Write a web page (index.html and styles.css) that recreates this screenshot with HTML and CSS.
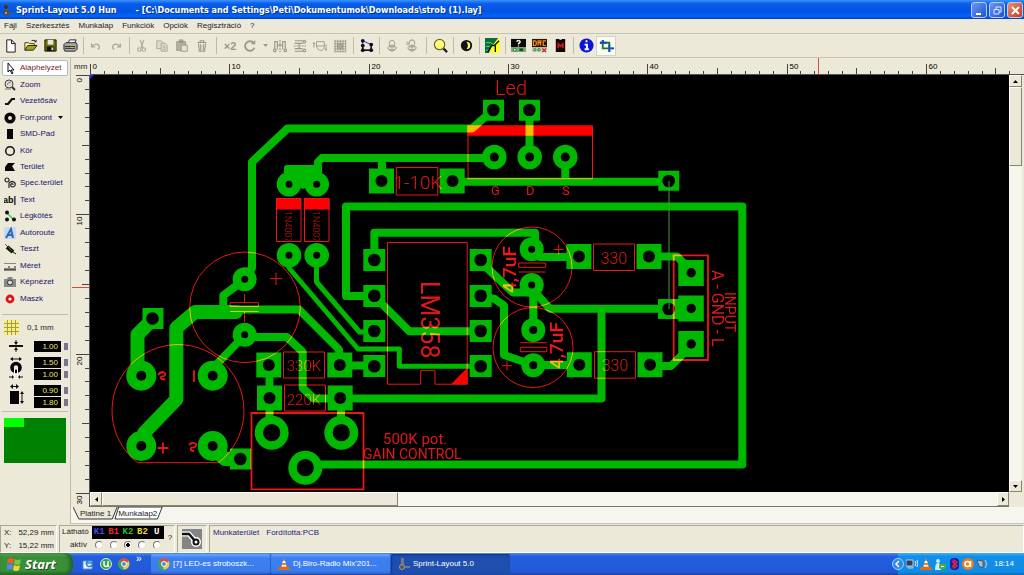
FILE: index.html
```html
<!DOCTYPE html>
<html lang="hu">
<head>
<meta charset="utf-8">
<title>Sprint-Layout 5.0 Hun</title>
<link rel="stylesheet" href="styles.css">
</head>
<body>
<header class="titlebar">
  <svg class="app-icon" width="13" height="14" viewBox="0 0 13 14"><path d="M3 1h3v8H3zM7 9h5v2H7z" fill="#555"/><circle cx="4" cy="10" r="3" fill="#4c4c48"/><circle cx="4" cy="10" r="1" fill="#bbb"/><circle cx="4" cy="4" r="2" fill="#333"/></svg>
  <h1 class="title"><span>Sprint-Layout 5.0 Hun</span><span>- [C:\Documents and Settings\Peti\Dokumentumok\Downloads\strob (1).lay]</span></h1>
  <div class="window-buttons">
    <button class="wbtn" aria-label="Minimize"><svg width="15" height="15" viewBox="0 0 15 15"><path d="M4 10h5v2H4z" fill="#fff"/></svg></button>
    <button class="wbtn" aria-label="Restore"><svg width="15" height="15" viewBox="0 0 15 15" fill="none" stroke="#dfe9ff"><path d="M6 6V4h5v5H9M4 6.500h5v4.500H4z"/></svg></button>
    <button class="wbtn wbtn-close" aria-label="Close"><svg width="15" height="15" viewBox="0 0 15 15" stroke="#fff" stroke-width="2"><path d="M4 4l7 7M11 4l-7 7"/></svg></button>
  </div>
</header>

<nav class="menubar">
  <button>Fájl</button><button>Szerkesztés</button><button>Munkalap</button><button>Funkciók</button><button>Opciók</button><button>Regisztráció</button><button>?</button>
</nav>

<div class="toolbar">
  <button class="tool" aria-label="New"><svg viewBox="0 0 16 16"><path d="M4 2h5l4 4v9H4zM9 2v4h4" fill="#fff" stroke="#111"/></svg></button>
  <button class="tool" aria-label="Open"><svg viewBox="0 0 16 16"><path d="M2 13V5h4l1 1h5v3" fill="#ffff80" stroke="#333"/><path d="M2 13l3-5h10l-4 5z" fill="#a8a020" stroke="#222"/><path d="M9 3q3-2 5 1m0-2v2h-2" fill="none" stroke="#222"/></svg></button>
  <button class="tool" aria-label="Save"><svg viewBox="0 0 16 16"><path d="M2 2h12v12H2z" fill="#747400" stroke="#111"/><path d="M5 2h6v5H5z" fill="#e8e8e0"/><path d="M4 9h8v5H4z" fill="#111"/><path d="M9 10h2v3H9z" fill="#ddd"/></svg></button>
  <button class="tool" aria-label="Print"><svg viewBox="0 0 16 16"><path d="M5 6l2-4h7l-2 4z" fill="#fff" stroke="#222"/><path d="M1 7l2-2h11l1 2v5l-2 2H2l-1-2z" fill="#aaa" stroke="#222"/><path d="M2 9h11M2 11h11" stroke="#222"/><path d="M8 10h3" stroke="#dd0"/></svg></button>
  <span class="sep"></span>
  <button class="tool off" aria-label="Undo" disabled><svg viewBox="0 0 16 16"><path d="M3 5v4h4M3 9q4-5 8-2 2 3-1 5" fill="none" stroke="#aaa797" stroke-width="1.500"/></svg></button>
  <button class="tool off" aria-label="Redo" disabled><svg viewBox="0 0 16 16"><path d="M13 5v4H9M13 9Q9 4 5 7q-2 3 1 5" fill="none" stroke="#aaa797" stroke-width="1.500"/></svg></button>
  <span class="sep"></span>
  <button class="tool off" aria-label="Cut" disabled><svg viewBox="0 0 16 16" fill="none" stroke="#aaa797" stroke-width="1.300"><path d="M6 1l3 9M10 1L7 10"/><circle cx="5" cy="12" r="2"/><circle cx="10" cy="12" r="2"/></svg></button>
  <button class="tool off" aria-label="Copy" disabled><svg viewBox="0 0 16 16" fill="#dddacb" stroke="#aaa797"><path d="M2 2h5l2 2v7H2z"/><path d="M7 5h5l2 2v7H7zM9 8h3M9 10h3M9 12h3"/></svg></button>
  <button class="tool off" aria-label="Paste" disabled><svg viewBox="0 0 16 16" fill="#b4b1a2" stroke="#96937f"><path d="M2 3h10v10H2zM5 1h4v3H5z"/><path d="M7 7h7v7H7z" fill="#e5e2d3"/></svg></button>
  <button class="tool off" aria-label="Delete" disabled><svg viewBox="0 0 16 16" fill="none" stroke="#9b9888" stroke-width="1.300"><path d="M3 4h10M6 4V2h4v2M4 5l1 9h6l1-9M6.500 6v7M9.500 6v7"/></svg></button>
  <span class="sep sep-wide"></span>
  <button class="tool off tool-text" disabled>×2</button>
  <button class="tool off" aria-label="Rotate" disabled><svg viewBox="0 0 16 16"><path d="M12.500 5A5.500 5.500 0 1 0 13 10" fill="none" stroke="#9b9888" stroke-width="2.200"/><path d="M9 6h5V1z" fill="#9b9888"/></svg></button>
  <button class="drop off" aria-label="Rotation angle" disabled><svg width="5" height="3" viewBox="0 0 5 3"><path d="M0 0h5L2.500 3z" fill="#9b9888"/></svg></button>
  <button class="tool off" aria-label="Mirror horizontal" disabled><svg viewBox="0 0 16 16" fill="none" stroke="#9b9888" stroke-width="1.300"><path d="M8 1v14" stroke-dasharray="2 1"/><path d="M2 11V3h3v9M14 11V3h-3v9M5 7h6"/><circle cx="2" cy="13" r="1.500"/><circle cx="14" cy="13" r="1.500"/></svg></button>
  <button class="tool off" aria-label="Mirror vertical" disabled><svg viewBox="0 0 16 16" fill="none" stroke="#9b9888" stroke-width="1.300"><path d="M1 8h14" stroke-dasharray="2 1"/><path d="M2 2h9M2 5h9M2 14h9M2 11h9M7 5v6"/><circle cx="13" cy="3" r="1.500"/><circle cx="13" cy="13" r="1.500"/></svg></button>
  <button class="tool off" aria-label="Swap side" disabled><svg viewBox="0 0 16 16" fill="none" stroke="#9b9888"><path d="M4 3h9v5H4zM4 8q1 5 5 5t4-5M1 10V4m-1 2l1-2 1 2M15 6v7m-1-2l1 2 1-2"/></svg></button>
  <button class="tool off" aria-label="Snap to grid" disabled><svg viewBox="0 0 16 16" fill="none" stroke="#9b9888"><path d="M1 2.500h14M1 5.500h14M1 8.500h14M1 11.500h14M1 14.500h14M2.500 1v14M5.500 1v14M8.500 1v14M11.500 1v14M14.500 1v14"/><path d="M5 5h6v6H5z" fill="#aaa797"/></svg></button>
  <span class="sep"></span>
  <button class="tool" aria-label="Remove connections"><svg viewBox="0 0 16 16"><path d="M4 3l9 4M4 3v10h9V7" fill="none" stroke="#2438c8"/><path d="M4 8v5h9V8" fill="none" stroke="#111" stroke-width="1.500"/><g fill="#111"><circle cx="4" cy="3" r="2"/><circle cx="4" cy="8" r="2"/><circle cx="4" cy="13" r="2"/><circle cx="13" cy="7" r="2"/><circle cx="13" cy="13" r="2"/></g></svg></button>
  <span class="sep"></span>
  <button class="tool off" aria-label="Group" disabled><svg viewBox="0 0 16 16" fill="none" stroke="#aaa797" stroke-width="1.200"><path d="M5 7V4q3-5 6 0v3M3 10q5-6 10 0-5 8-10 0M5 9h6M5 12h6M8 7v7"/></svg></button>
  <button class="tool off" aria-label="Ungroup" disabled><svg viewBox="0 0 16 16" fill="none" stroke="#aaa797" stroke-width="1.200"><path d="M5 5V3q3-4 6 0v4M3 10q5-6 10 0-5 8-10 0M5 9h6M5 12h6M8 7v7M2 3l3 3M1 6h4"/></svg></button>
  <span class="sep sep-wide"></span>
  <button class="tool" aria-label="Zoom"><svg viewBox="0 0 16 16"><path d="M11 11l4 4" stroke="#222" stroke-width="2.500"/><circle cx="7" cy="7" r="5.500" fill="#ffff70" stroke="#6d6936" stroke-width="1.300"/></svg></button>
  <span class="sep"></span>
  <button class="tool" aria-label="Contrast"><svg viewBox="0 0 16 16"><circle cx="8" cy="8" r="6" fill="#111"/><path d="M8 4a4 4 0 1 1 0 8q3-4 0-8" fill="#ffff60"/></svg></button>
  <span class="sep"></span>
  <button class="tool" aria-label="Photo view"><svg viewBox="0 0 16 16"><path d="M0 0h16v16H0z" fill="#ffff28"/><path d="M0 0h14L8 8 4 16H0z" fill="#086b42"/><path d="M1 5h5l3 2M1 9h4l2 1M1 13h4" stroke="#48ee45" fill="none"/><path d="M15 3l-5 5H7l-4 7M11 8v7" stroke="#111" stroke-width="1.500" fill="none"/></svg></button>
  <span class="sep"></span>
  <div class="tool-group">
    <button class="tool" aria-label="Properties"><svg viewBox="0 0 16 16"><path d="M0 1h16v9H0z" fill="#0a0a0a"/><path d="M0 10h16v5H0z" fill="#82a584"/><path d="M6 4q1-2 3-1 2 1-1 3v1M8 8v1" stroke="#fff" fill="none" stroke-width="1.400"/><path d="M9 11h4v3H9z" fill="#065b09"/><circle cx="4" cy="12.500" r="1.500" fill="#fff" stroke="#087308"/></svg></button>
    <button class="tool" aria-label="Design rule check"><svg viewBox="0 0 16 16"><path d="M0 1h16v9H0z" fill="#20160a"/><path d="M0 10h16v5H0z" fill="#ccd0bd"/><path d="M1.500 3v5h2l1-1V4l-1-1zM6.500 8V3h3v2h-3m2 0l1 3M15 3h-3v5h3" stroke="#ff8a16" stroke-width="1.300" fill="none"/><path d="M11 11l4 4m0-4l-4 4" stroke="#d01010" stroke-width="1.300"/><circle cx="3" cy="12.500" r="1.300" fill="none" stroke="#178322"/><circle cx="7.500" cy="12.500" r="1.300" fill="none" stroke="#178322"/></svg></button>
    <button class="tool" aria-label="Macro library"><svg viewBox="0 0 16 16"><path d="M3 1h3l2 1 2-1h3v14H3z" fill="#100404"/><path d="M5.500 11V6L8 9l2.500-3v5" stroke="#e51b1b" fill="none" stroke-width="1.500"/></svg></button>
  </div>
  <span class="sep"></span>
  <button class="tool" aria-label="Info"><svg viewBox="0 0 16 16"><circle cx="8" cy="8" r="7.500" fill="#0d13d9"/><path d="M8 2.500v2M6 7h2.500v5M6 12h4.500" stroke="#fff" stroke-width="2" fill="none"/></svg></button>
  <button class="tool pressed" aria-label="Transparent"><svg viewBox="0 0 16 16" fill="none"><path d="M4 2v9h11M1 5h10v10" stroke="#168020" stroke-width="2"/><path d="M1 5h7M11 7v8M4 2v3M13 11h3" stroke="#1746d0" stroke-width="2"/></svg></button>
</div>

<main class="main">
  <aside class="sidebar">
    <div class="modes">
      <button class="mode mode-active"><svg viewBox="0 0 12 12"><path d="M4 1v9l2-2 2 4 1-1-2-3h3z" fill="#fff" stroke="#111"/></svg>Alaphelyzet</button>
      <button class="mode"><svg viewBox="0 0 12 12"><path d="M8 8l3 3" stroke="#333" stroke-width="2"/><circle cx="5" cy="5" r="4" fill="#deded6" stroke="#444"/><path d="M3 6q1-3 4-3M1 10h6" stroke="#777" fill="none"/></svg>Zoom</button>
      <button class="mode"><svg viewBox="0 0 12 12"><path d="M1 9h3l4-5h3" fill="none" stroke="#111" stroke-width="2.200"/></svg>Vezetősáv</button>
      <button class="mode"><svg viewBox="0 0 12 12"><circle cx="6" cy="6" r="3.800" fill="none" stroke="#050505" stroke-width="3.600"/></svg>Forr.pont<svg class="caret" viewBox="0 0 5 3"><path d="M0 0h5L2.500 3z"/></svg></button>
      <button class="mode"><svg viewBox="0 0 12 12"><path d="M3 1h6v10H3z" fill="#050505"/></svg>SMD-Pad</button>
      <button class="mode"><svg viewBox="0 0 12 12"><circle cx="6" cy="6" r="4.300" fill="none" stroke="#111" stroke-width="1.500"/></svg>Kör</button>
      <button class="mode"><svg viewBox="0 0 12 12"><path d="M4 2h7L8 5l3 5H1V6z" fill="#080808"/></svg>Terület</button>
      <button class="mode"><svg viewBox="0 0 12 12" fill="none" stroke="#222" stroke-width="1.200"><circle cx="3" cy="3" r="2"/><path d="M5 6q3-3 6 0 1 4-3 4-2-1-1-3 2-1 2 1M5 6v5"/></svg>Spec.terület</button>
      <button class="mode"><svg viewBox="0 0 12 12"><text class="glyph" x="-1" y="9">ab|</text></svg>Text</button>
      <button class="mode"><svg viewBox="0 0 12 12"><path d="M3 3l6 6" stroke="#38d238" stroke-width="1.500"/><g fill="#111"><circle cx="3" cy="2.500" r="2"/><circle cx="3" cy="9.500" r="2"/><circle cx="10" cy="9.500" r="2"/></g></svg>Légkötés</button>
      <button class="mode"><svg viewBox="0 0 12 12"><path d="M0 0h12v12H0z" fill="#c7daf4"/><path d="M2 11L7 2l2 9M4 8h5" stroke="#3366b4" stroke-width="2" fill="none"/></svg>Autoroute</button>
      <button class="mode"><svg viewBox="0 0 12 12"><path d="M1 1l3 3" stroke="#b33"/><path d="M3 4l6 5" stroke="#111" stroke-width="4"/><path d="M4 4l4 4" stroke="#2a8a2a"/><path d="M9 9l3 2" stroke="#111"/></svg>Teszt</button>
      <button class="mode"><svg viewBox="0 0 12 12"><path d="M0 3.500h12" stroke="#888"/><path d="M1 10V8m2 2V8m2 2V6m2 4V8m2 2V8m2 2V6M0 10h12" stroke="#222"/></svg>Méret</button>
      <button class="mode"><svg viewBox="0 0 12 12"><path d="M0 3h3l1-2h4l1 2h3v8H0z" fill="#888"/><circle cx="6" cy="6.500" r="2.500" fill="#ddd" stroke="#333"/></svg>Képnézet</button>
      <button class="mode"><svg viewBox="0 0 12 12"><circle cx="6" cy="6" r="3" fill="#fff" stroke="#e01217" stroke-width="2.800"/></svg>Maszk</button>
    </div>
    <div class="params">
      <button class="grid-button"><svg width="15" height="15" viewBox="0 0 15 15"><path d="M0 0h15v15H0z" fill="#f7f080"/><path d="M0 3.500h15M0 7.500h15M0 11.500h15M3.500 0v15M7.500 0v15M11.500 0v15" stroke="#a89c40"/></svg>0,1 mm</button>
      <div class="param">
        <svg width="16" height="12" viewBox="0 0 16 12"><path d="M1 6h14" stroke="#111" stroke-width="2"/><path d="M8 0v3M8 9v3" stroke="#111"/><path d="M6 2h4L8 5zM6 10h4L8 7z" fill="#111"/></svg>
        <div class="fields"><label><input value="1.00" aria-label="Track width"><i></i></label></div>
      </div>
      <div class="param">
        <svg width="16" height="24" viewBox="0 0 16 24"><path d="M3 3h10M1 21h4M11 21h4" stroke="#111"/><path d="M5 1v4L2 3zM11 1v4l3-2zM4 19v4l2-2zM12 19v4l-2-2z" fill="#111"/><circle cx="8" cy="11.500" r="4" fill="none" stroke="#050505" stroke-width="3.600"/><path d="M6.500 12v7M9.500 12v7" stroke="#fff"/></svg>
        <div class="fields"><label><input value="1.50" aria-label="Pad diameter"><i></i></label><label><input value="1.00" aria-label="Drill diameter"><i></i></label></div>
      </div>
      <div class="param">
        <svg width="16" height="24" viewBox="0 0 16 24"><path d="M2 7h9v13H2z" fill="#050505"/><path d="M3 2.500h7M14 9v9" stroke="#111"/><path d="M5 0v5L2 2.500zM8 0v5l3-2.500zM12 10h4l-2-3zM12 17h4l-2 3z" fill="#111"/></svg>
        <div class="fields"><label><input value="0.90" aria-label="SMD width"><i></i></label><label><input value="1.80" aria-label="SMD height"><i></i></label></div>
      </div>
    </div>
    <div class="navigator"><div class="viewport"></div></div>
  </aside>

  <section class="workspace">
    <div class="corner">mm</div>
    <svg class="ruler-h" id="ruler-h" aria-hidden="true"></svg>
    <svg class="ruler-v" id="ruler-v" aria-hidden="true"></svg>
    <svg class="board" role="img" aria-label="PCB">
      <g transform="translate(-90 -75)">
        <path d="M90 75h4l-4 4z" fill="#1a2cff"/>
        <g class="copper">
          <g class="trace">
            <path d="M244.500 279l7.500-11V162l35.500-33.500H472L493 110"/>
            <path d="M529.500 110v47M565.300 157v24M316.700 184l1.300-22 4-4H494M382 158v23M452 181.700h216"/>
            <path d="M305 464.500h437.300v-258H346V296h28"/>
            <path d="M374.300 260v-27.300H535v17M540 257h38"/>
            <path d="M480.700 262L513 292.500h19M533.300 285v45M534 291l16 17.800h118M601.500 309v89.500H340"/>
            <path d="M480.700 296l14 3 9.300 6.500V355l29 10h45"/>
            <path d="M376 298l33.500 33.300H481M340 365.500h34"/>
            <path d="M649 256.500h28l14 14M650 366h21l20-20"/>
            <path d="M244 280l-20.700 15.500V311M230 309.500h69l40 40 1 15"/>
            <path d="M244.700 337h42l16 15v36l11 10.500h27M243 337l-31 32M269.500 365v68M341 398v34"/>
          </g>
          <g class="trace trace-wide">
            <path d="M141 444l3-11 32.300-33.500V328L195 312h41M152 320l-14.500 14.500V372"/>
            <path d="M213 448l12 11h15"/>
          </g>
          <g class="trace trace-thin">
            <path d="M289 256v12l69 81h41.300v17.300H481"/><path d="M316.500 256v26l43 50H374"/>
          </g>
          <path d="M287 165h32q3 0 3 3v19h-15l-4 2-4-2h-15v-19q0-3 3-3z"/>
          <path d="M142.500 308h21v21h-21zM230 448.500h21v21h-21zM256.300 352.500h25v25h-25zM327.300 352.500h25v25h-25zM257 385.500h25v25h-25zM327.700 385.500h25v25h-25zM369 168.500h25v25h-25zM439.700 168.500h25v25h-25zM483 99.700h21v21h-21zM519 99.700h21v21h-21zM658.300 170.700h21v20h-21zM658 299h21v20h-21z"/>
          <path d="M363.300 249h22v22h-22zM363.300 285h22v22h-22zM363.300 320h22v22h-22zM363.300 355h22v22h-22zM469.700 249h22v22h-22zM469.700 285h22v22h-22zM469.700 320h22v22h-22zM469.700 355h22v22h-22z"/>
          <path d="M566.400 244h25v25h-25zM636.500 244h25v25h-25zM566.800 352.300h25v25h-25zM637.500 352.300h25v25h-25zM678.300 260h25.500v26h-25.500zM678.300 295.500h25.500v26h-25.500zM678.300 331h25.500v26h-25.500z"/>
          <g>
            <circle cx="141.300" cy="375.700" r="15"/><circle cx="212.700" cy="375.700" r="15"/><circle cx="141.300" cy="446" r="15"/><circle cx="212.700" cy="446" r="15"/>
            <circle cx="271.700" cy="432.700" r="17"/><circle cx="341.300" cy="432.700" r="17"/><circle cx="305.300" cy="467.700" r="17"/>
            <circle cx="244.700" cy="279.300" r="12"/><circle cx="244.700" cy="334.700" r="12"/><circle cx="289" cy="184.300" r="12.300"/><circle cx="316.700" cy="184.300" r="12.300"/><circle cx="289" cy="255.300" r="12.300"/><circle cx="316.700" cy="255.300" r="12.300"/>
            <circle cx="494.300" cy="157" r="12.300"/><circle cx="529.700" cy="157" r="12.300"/><circle cx="565.300" cy="157" r="12.300"/>
            <circle cx="531.700" cy="249.300" r="12"/><circle cx="531.700" cy="285" r="12"/><circle cx="533.300" cy="330" r="12"/><circle cx="533.300" cy="365.300" r="12"/>
          </g>
        </g>
        <g class="holes">
          <g><circle cx="152.500" cy="318.500" r="6.300"/><circle cx="240.300" cy="459" r="6.300"/><circle cx="268.800" cy="365" r="6"/><circle cx="339.800" cy="365" r="6"/><circle cx="269.500" cy="398" r="6"/><circle cx="340.200" cy="398" r="6"/><circle cx="381.500" cy="181" r="6"/><circle cx="452.500" cy="181" r="6"/><circle cx="493.300" cy="110" r="6.300"/><circle cx="529.300" cy="110" r="6.300"/><circle cx="668.700" cy="181" r="6.300"/><circle cx="668.700" cy="309" r="6.300"/></g>
          <g><circle cx="374.300" cy="260" r="6.300"/><circle cx="374.300" cy="295.700" r="6.300"/><circle cx="374.300" cy="331" r="6.300"/><circle cx="374.300" cy="366.300" r="6.300"/><circle cx="480.700" cy="260" r="6.300"/><circle cx="480.700" cy="295.700" r="6.300"/><circle cx="480.700" cy="331" r="6.300"/><circle cx="480.700" cy="366.300" r="6.300"/></g>
          <g><circle cx="579" cy="256.500" r="6"/><circle cx="649" cy="256.500" r="6"/><circle cx="579.300" cy="364.700" r="6"/><circle cx="650" cy="364.700" r="6"/><circle cx="691.200" cy="272.800" r="4.700"/><circle cx="691.200" cy="308.500" r="4.700"/><circle cx="691.200" cy="344" r="4.700"/></g>
          <g><circle cx="141.300" cy="375.700" r="5"/><circle cx="212.700" cy="375.700" r="5"/><circle cx="141.300" cy="446" r="5"/><circle cx="212.700" cy="446" r="5"/><circle cx="271.700" cy="432.700" r="8.600"/><circle cx="341.300" cy="432.700" r="8.600"/><circle cx="305.300" cy="467.700" r="8.600"/></g>
          <g><circle cx="244.700" cy="279.300" r="3.500"/><circle cx="244.700" cy="334.700" r="3.500"/><circle cx="289" cy="184.300" r="3.500"/><circle cx="316.700" cy="184.300" r="3.500"/><circle cx="289" cy="255.300" r="3.500"/><circle cx="316.700" cy="255.300" r="3.500"/><circle cx="494.300" cy="157" r="4.500"/><circle cx="529.700" cy="157" r="4.500"/><circle cx="565.300" cy="157" r="4.500"/><circle cx="531.700" cy="249.300" r="3.500"/><circle cx="531.700" cy="285" r="3.500"/><circle cx="533.300" cy="330" r="4"/><circle cx="533.300" cy="365.300" r="4"/></g>
        </g>
        <path d="M669 181v128" stroke="#3f9b3f"/>
        <g class="silk">
          <g class="silk-fill"><path d="M467.300 125.300h125.400v10.500H467.300zM276 198h25v11.500h-25zM304 198h25.500v11.500H304zM451 384.300l16.300-16.500v16.500z"/></g>
          <path d="M468 126v52.700h124.500V126M396.300 167.500h41.500v27.500h-41.500zM276.500 198.500h24.500v43h-24.500zM304.500 198.500h24.500v43h-24.500z"/>
          <path d="M387.500 242.500h79.700v141.700H435V370.300h-14.300v13.900h-33.200z"/>
          <path d="M283.500 352h41v26h-41zM284.500 385h41v26h-41zM593.500 244h41v26.500h-41zM594.500 351.700h41v26.500h-41z"/>
          <path d="M673.700 255.300H708V360h-34.300zM251.500 413h112v76.300h-112z" stroke-width="1.800"/>
          <circle cx="245" cy="307.300" r="55.300"/><circle cx="532" cy="267" r="40"/><circle cx="533" cy="347.500" r="40"/>
          <path d="M137.500 462.700h81A66 66 0 1 0 137.500 462.700z"/>
          <path d="M230 302.700h28.500v3.800H230zM230 311.500h28.500M244.500 294v8.500M244.500 312v10M276 272.500v12.500M269.800 278.700h12.500"/>
          <path d="M518.700 263h27v4.300h-27zM518.700 272h27M520.300 342.700h26.500M520.300 347.300h26.500v4.400h-26.500zM558.700 244.500v10M553.700 249.500h10M507 360.700v10M502 365.700h10"/>
          <path d="M194 370v12M163 442.500v11M157.500 448h11M158 375q2-3 5-3 4 2 1 4l-3 1q-1 3 4 2M189 445q2-3 5-2 4 1 1 4l-4 1q-1 3 3 3" stroke-width="1.800"/>
          <g class="legend">
            <text x="495" y="95" font-size="20">Led</text>
            <text x="418" y="189" font-size="19" text-anchor="middle">1-10K</text>
            <text x="304" y="371" font-size="15" text-anchor="middle">330K</text>
            <text x="304" y="405" font-size="15" text-anchor="middle">220K</text>
            <text x="614" y="264" font-size="16" text-anchor="middle">330</text>
            <text x="615" y="371" font-size="16" text-anchor="middle">330</text>
            <text transform="translate(285 211) rotate(90)" font-size="9">1N4007</text>
            <text transform="translate(313 211) rotate(90)" font-size="9">1N4007</text>
          </g>
          <g class="legend legend-strong">
            <text transform="translate(421 281) rotate(90)" font-size="25">LM358</text>
            <text x="491" y="195" font-size="13">G</text><text x="526" y="195" font-size="13">D</text><text x="562" y="195" font-size="13">S</text>
            <text x="383" y="444" font-size="15">500K pot.</text>
            <text x="363" y="459" font-size="14">GAIN CONTROL</text>
            <text transform="translate(712 270) rotate(90)" font-size="16">A - GND - L</text>
            <text transform="translate(725 292) rotate(90)" font-size="14">INPUT</text>
          </g>
          <g class="legend legend-bold">
            <text transform="translate(516 293) rotate(-90)" font-size="19">4,7uF</text>
            <text transform="translate(563 369) rotate(-90)" font-size="19">4,7uF</text>
          </g>
        </g>
      </g>
    </svg>
    <div class="scroll scroll-v">
      <button aria-label="Scroll up"><svg viewBox="0 0 5 3"><path d="M0 3h5L2.500 0z"/></svg></button>
      <div class="thumb"></div><div class="track"></div>
      <button aria-label="Scroll down"><svg viewBox="0 0 5 3"><path d="M0 0h5L2.500 3z"/></svg></button>
    </div>
    <div class="scroll scroll-h">
      <button aria-label="Scroll left"><svg viewBox="0 0 5 5"><path d="M4 0v5L1 2.500z"/></svg></button>
      <div class="thumb"></div><div class="track"></div>
      <button aria-label="Scroll right"><svg viewBox="0 0 5 5"><path d="M1 0v5l3-2.500z"/></svg></button>
    </div>
    <div class="tabs">
      <button class="tab"><svg viewBox="0 0 46 13" preserveAspectRatio="none"><path d="M0 0l6 12h34l5-12" fill="#ece9d8" stroke="#333"/></svg><span>Platine 1</span></button>
      <button class="tab tab-active"><svg viewBox="0 0 52 13" preserveAspectRatio="none"><path d="M5 0h46l-5 12H1z" fill="#fff" stroke="#333"/></svg><span>Munkalap2</span></button>
    </div>
  </section>
</main>

<footer class="statusbar">
  <dl class="coords"><dt>X:</dt><dd>52,29 mm</dd><dt>Y:</dt><dd>15,22 mm</dd></dl>
  <div class="layers">
    <span>Látható</span>
    <div class="layer-names"><span class="k1">K1</span><span class="b1">B1</span><span class="k2">K2</span><span class="b2">B2</span><span class="u">U</span></div>
    <span class="active-label">aktív</span>
    <div class="layer-radios"><input type="radio" name="layer" aria-label="K1"><input type="radio" name="layer" aria-label="B1"><input type="radio" name="layer" aria-label="K2" checked><input type="radio" name="layer" aria-label="B2"><input type="radio" name="layer" aria-label="U"></div>
    <button class="help">?</button>
  </div>
  <div class="status-icon"><svg width="20" height="20" viewBox="0 0 20 20"><path d="M0 0h20v20H0z" fill="#858585"/><path d="M0 5h7l6 7" stroke="#fff" stroke-width="5" fill="none"/><circle cx="14" cy="13" r="5" fill="#fff"/><path d="M0 5h7l6 7" stroke="#111" stroke-width="2.500" fill="none"/><circle cx="14" cy="13" r="2.500" fill="#fff" stroke="#111" stroke-width="2"/></svg></div>
  <p class="message"><span>Munkaterület</span><span>Fordította:PCB</span></p>
</footer>

<div class="taskbar">
  <button class="start"><svg width="15" height="15" viewBox="0 0 15 15"><path d="M1 2q3-2 6 0L6 7Q3 5 0 7z" fill="#f0592a"/><path d="M8 2q3 2 6 0l-1 5q-3 2-6 0z" fill="#7cc243"/><path d="M0 8q3-2 6 0l-1 5q-2-2-5 0z" fill="#4a8bf5"/><path d="M7 8q3 2 6 0l-1 5q-3 2-6 0z" fill="#fbcf35"/></svg>Start</button>
  <div class="quick">
    <button aria-label="Mail"><svg width="12" height="12" viewBox="0 0 12 12"><path d="M1 3h9v8H1z" fill="#e9f3ff" stroke="#5c8ec5"/><path d="M9 3a3 3 0 1 0 1 4M5 5h5" stroke="#2584db" stroke-width="1.600" fill="none"/></svg></button>
    <button aria-label="uTorrent"><svg width="12" height="12" viewBox="0 0 12 12"><circle cx="6" cy="6" r="5.500" fill="#30a050" stroke="#d7f0dc"/><path d="M4 3v4q2 3 4 0V3M8 7l1 2" stroke="#fff" stroke-width="1.500" fill="none"/></svg></button>
    <button aria-label="Chrome"><svg width="12" height="12" viewBox="0 0 12 12"><circle cx="6" cy="6" r="5.500" fill="#e9cc39"/><path d="M6 6L1 3a6 6 0 0 1 10 0z" fill="#db4b39"/><path d="M6 6L1 3a6 6 0 0 0 4 9z" fill="#36a64f"/><circle cx="6" cy="6" r="2.500" fill="#4c8ceb" stroke="#fff"/></svg></button>
    <button class="more" aria-label="More">»</button>
  </div>
  <div class="tasks">
    <button class="task"><svg width="12" height="12" viewBox="0 0 12 12"><circle cx="6" cy="6" r="5.500" fill="#e9cc39"/><path d="M6 6L1 3a6 6 0 0 1 10 0z" fill="#db4b39"/><path d="M6 6L1 3a6 6 0 0 0 4 9z" fill="#36a64f"/><circle cx="6" cy="6" r="2.500" fill="#4c8ceb" stroke="#fff"/></svg>[7] LED-es stroboszk...</button>
    <button class="task"><svg width="12" height="12" viewBox="0 0 12 12"><path d="M1 9h10l1 3H0z" fill="#e66a16"/><path d="M6 0l3 9H3z" fill="#f18128"/><path d="M5 3h2l.7 2H4.300zM4 7h4l.5 1.500h-5z" fill="#fff"/></svg>Dj.Biro-Radio Mix'201...</button>
    <button class="task task-active"><svg width="12" height="12" viewBox="0 0 12 12"><path d="M3 0h3v8H3zM7 8h5v2H7z" fill="#777"/><circle cx="4" cy="9" r="2.500" fill="#555" stroke="#999"/></svg>Sprint-Layout 5.0</button>
  </div>
  <div class="tray">
    <button class="collapse" aria-label="Hide icons"><svg width="12" height="12" viewBox="0 0 12 12"><circle cx="6" cy="6" r="5.500" fill="#2b8ae8" stroke="#a5d0f8"/><path d="M7 3L4 6l3 3" stroke="#fff" stroke-width="1.500" fill="none"/></svg></button>
    <svg width="12" height="12" viewBox="0 0 12 12"><path d="M0 2h7v6H0zM2 9h5v1H2z" fill="#2b3f62" stroke="#bcd"/><path d="M9 3q2 2 0 5M11 2q2 4 0 7" stroke="#dfefff" fill="none"/></svg>
    <svg width="12" height="12" viewBox="0 0 12 12"><path d="M1 9h10l1 3H0z" fill="#e66a16"/><path d="M6 0l3 9H3z" fill="#f18128"/><path d="M5 3h2l.7 2H4.300zM4 7h4l.5 1.500h-5z" fill="#fff"/></svg>
    <svg width="12" height="12" viewBox="0 0 12 12"><circle cx="4" cy="3" r="2" fill="#c5e8fb"/><path d="M1 12q0-7 3-7t3 7z" fill="#cceaf8"/><rect x="5" y="6" width="7" height="5" rx="2" fill="#43b72b"/><path d="M7 8.500h3" stroke="#fff"/></svg>
    <svg width="12" height="12" viewBox="0 0 12 12"><rect x="2" width="9" height="12" rx="4" fill="#171fa8"/><path d="M4 3l5 5-3 2V2l3 2-5 5" stroke="#e12340" stroke-width="1.400" fill="none"/></svg>
    <svg width="12" height="12" viewBox="0 0 12 12"><circle cx="6" cy="6" r="6" fill="#f07c1e"/><circle cx="5.500" cy="6" r="2.500" fill="none" stroke="#fff" stroke-width="1.500"/><path d="M8.500 3v6" stroke="#fff" stroke-width="1.500"/></svg>
    <svg width="12" height="12" viewBox="0 0 12 12"><path d="M1 2l6 1v7L3 8z" fill="#b5bcc2" stroke="#4b5666"/><path d="M9 2q3 4 0 8" stroke="#9bb6d5" stroke-width="1.500" fill="none"/></svg>
    <time>18:14</time>
  </div>
</div>
<script src="rulers.js"></script>
</body>
</html>
```
FILE: styles.css
```css
* { box-sizing: border-box; }
body { margin: 0; height: 100vh; display: flex; flex-direction: column; overflow: hidden; background: #ece9d8; color: #222; font: 8px/12px "Liberation Sans", Arial, sans-serif; }
button { margin: 0; padding: 0; border: 0; background: none; color: inherit; font: inherit; white-space: nowrap; }
svg { display: block; flex: none; }

.titlebar { display: flex; align-items: center; flex: none; height: 19px; padding: 0 1px 0 2px; background: linear-gradient(#3a94ff 0, #0a5be8 20%, #0055e5 60%, #0564f5 85%, #003dc4 100%); }
.title { flex: 1; display: flex; gap: 19px; margin: 0 0 0 1px; color: #fff; font: bold 9px/18px "DejaVu Sans Condensed", "Open Sans", sans-serif; white-space: pre; text-shadow: 1px 1px #0a318c; }
.window-buttons { display: flex; gap: 2px; }
.wbtn { width: 16px; height: 16px; border: 1px solid #b7cdfa; border-radius: 3px; background: linear-gradient(135deg, #6d96f2, #1f52d3); overflow: hidden; }
.wbtn-close { background: linear-gradient(135deg, #ee8f70, #c83612); }

.menubar { display: flex; align-items: center; gap: 9px; flex: none; height: 15px; padding: 0 4px; border-bottom: 1px solid #c6c4b6; }
.toolbar { display: flex; align-items: center; flex: none; height: 24px; border-bottom: 1px solid #c6c4b6; }
.tool { width: 20px; height: 20px; display: grid; place-items: center; }
.tool svg { width: 15px; height: 15px; }
.tool.off svg { width: 14px; height: 14px; }
.tool-text { font: bold 11px/20px "Liberation Sans", sans-serif; color: #9b9888; }
.drop { width: 10px; display: grid; place-items: center; }
.tool-group { display: flex; gap: 1px; }
.pressed { background: #fafaf6; border: 1px solid #d5d2c3; }
.sep { width: 6px; height: 17px; background: linear-gradient(#bdbaa9, #bdbaa9) center / 1px 100% no-repeat; }
.sep-wide { width: 8px; }

.main { flex: 1; min-height: 0; display: grid; grid-template-columns: 71px 1fr; }
.sidebar { padding: 2px 2px 0; border-right: 1px solid #bfbcad; }
.modes { display: grid; grid-auto-rows: 1fr; height: 247px; }
.mode { display: flex; align-items: center; gap: 4px; padding-left: 1px; border: 1px solid transparent; border-radius: 2px; color: #15156b; text-align: left; }
.mode svg { width: 12px; height: 12px; }
.mode .caret { width: 5px; height: 3px; margin-left: 2px; }
.mode-active { background: #fff; border-color: #a8bccb; color: #801818; }
.glyph { font: bold 9px "Liberation Sans", sans-serif; }
.params { display: flex; flex-direction: column; gap: 4px; margin-top: 7px; padding: 4px 0 3px 2px; border: solid #bfbcad; border-width: 1px 0; }
.grid-button { display: flex; align-items: center; gap: 8px; height: 17px; }
.param { display: flex; align-items: center; justify-content: space-between; padding-left: 4px; }
.fields { display: grid; gap: 1px; }
.fields label { display: flex; align-items: center; gap: 3px; }
.fields input { width: 27px; height: 11px; padding: 0 3px 0 0; border: 0; background: #000; color: #e8e860; font: 8px/11px "Liberation Sans", sans-serif; text-align: right; }
.fields i { width: 4px; height: 7px; border: 1px solid #77768a; border-width: 1px 2px; background: #d5d2c9; }
.navigator { height: 45px; margin: 6px 2px 0; background: #008000; }
.viewport { width: 20px; height: 9px; background: #0f0; }

.workspace { display: grid; grid-template-columns: 19px 1fr 15px; grid-template-rows: 17px 1fr 15px 17px; min-width: 0; min-height: 0; }
.corner { padding: 3px 0 0 3px; }
.ruler-h { width: 100%; height: 100%; grid-column: 2 / 4; border-bottom: 1px solid #555; }
.ruler-v { width: 100%; height: 100%; grid-row: 2 / 4; border-right: 1px solid #555; }
.tick { stroke: #444; stroke-width: 1px; }
.cursor { stroke: #e0483c; stroke-width: 1px; }
.board { width: 100%; height: 100%; background: #000; isolation: isolate; }
.copper { fill: #00b800; }
.trace { fill: none; stroke: #00b800; stroke-width: 8px; stroke-linejoin: round; stroke-linecap: round; }
.trace-wide { stroke-width: 14px; }
.trace-thin { stroke-width: 5px; }
.holes { fill: #000; }
.silk { fill: none; stroke: #e81818; stroke-width: 1px; mix-blend-mode: screen; }
.silk-fill { fill: #f00; stroke: none; }
.legend { font-family: Roboto, sans-serif; font-weight: 300; fill: #e01818; stroke: none; }
.legend-strong { font-weight: 400; }
.legend-bold { font-weight: 500; fill: #f01818; }

.scroll { display: flex; background: #f6f5ee; }
.scroll button { display: grid; place-items: center; width: 12px; height: 12px; background: #ece9d8; border: 1px solid; border-color: #fff #888474 #888474 #fff; }
.scroll svg { width: 5px; height: 5px; }
.thumb { background: #ece9d8; border: 1px solid; border-color: #fff #888474 #888474 #fff; }
.track { flex: 1; }
.scroll-v { flex-direction: column; margin-right: 2px; }
.scroll-v .thumb { height: 79px; }
.scroll-v button { width: 100%; }
.scroll-h { grid-column: 2; border-bottom: 1px solid #77756a; }
.scroll-h .thumb { width: 296px; }
.scroll-h button { height: 100%; }
.tabs { grid-column: 1 / 4; display: flex; background: #f6f5ee; border-bottom: 1px solid #c6c4b6; padding-left: 2px; }
.tab { position: relative; height: 13px; padding: 0 7px; }
.tab svg { position: absolute; inset: 0; width: 100%; height: 100%; }
.tab span { position: relative; }
.tab-active { padding: 0 6px 0 4px; margin-left: -4px; }

.statusbar { display: flex; gap: 2px; flex: none; height: 29px; padding-top: 1px; }
.statusbar > * { border: 1px solid; border-color: #aaa797 #fff #fff #aaa797; }
.coords { display: grid; grid-template-columns: 12px 1fr; width: 57px; margin: 0; padding: 1px 2px 0 3px; }
.coords dd { margin: 0; text-align: right; }
.layers { display: grid; grid-template-columns: 28px 72px 8px; grid-template-rows: 13px 11px; column-gap: 2px; width: 116px; padding-left: 2px; }
.layer-names, .layer-radios { display: grid; grid-template-columns: repeat(5, 1fr); justify-items: center; align-items: center; }
.layer-names { background: #000; font: bold 9px/13px "Liberation Mono", monospace; }
.k1 { color: #4646ee; } .b1 { color: #e42a2a; } .k2 { color: #32b832; } .b2 { color: #e5d833; } .u { color: #fff; }
.active-label { grid-row: 2; text-align: right; padding-right: 3px; }
.layer-radios { grid-row: 2; grid-column: 2; }
.layer-radios input { appearance: none; width: 8px; height: 8px; margin: 0; border: 1px solid; border-color: #777 #e4e2d6 #e4e2d6 #777; border-radius: 50%; background: #fff; }
.layer-radios input:checked { background: radial-gradient(#000 40%, #fff 45%); }
.help { grid-row: 1 / 3; grid-column: 3; }
.status-icon { width: 30px; padding: 3px 4px; }
.message { flex: 1; display: flex; gap: 7px; margin: 0; padding: 1px 3px; color: #1c1c84; }

.taskbar { display: flex; flex: none; height: 22px; background: linear-gradient(#4b8cf2 0, #245edb 15%, #2258d8 85%, #1b469e 100%); color: #fff; }
.start { display: flex; align-items: center; gap: 3px; width: 73px; padding-left: 7px; border-radius: 0 8px 8px 0; background: linear-gradient(#62b361 0, #3a8e3a 20%, #389138 80%, #256b25 100%); box-shadow: inset -3px 0 4px #235f23; font: italic bold 13px/20px "Open Sans", sans-serif; text-shadow: 1px 1px #254d20; }
.quick { display: flex; align-items: center; gap: 6px; width: 78px; padding-left: 9px; }
.more { align-self: start; font-size: 10px; }
.tasks { display: flex; gap: 1px; flex: 1; padding: 1px 0; }
.task { display: flex; align-items: center; gap: 3px; width: 119px; padding-left: 7px; border-radius: 2px; background: linear-gradient(#6aa5ff, #3c80f0 20%, #3a7cec 85%, #2c64cc); }
.task-active { background: #1e4fae; box-shadow: inset 1px 1px 2px #12357c; }
.tray { display: flex; align-items: center; gap: 2px; padding: 0 10px 0 0; background: linear-gradient(#3cb4f8 0, #128fe8 15%, #118ce6 85%, #0d6db5 100%); }
.tray time { margin-left: 4px; }
.collapse { margin-left: -6px; }
```
FILE: rulers.js
```javascript
const NS = "http://www.w3.org/2000/svg";
const UNIT = 13.93;

function add(parent, name, attrs, text) {
  const el = document.createElementNS(NS, name);
  for (const key in attrs) el.setAttribute(key, attrs[key]);
  if (text !== undefined) el.textContent = text;
  parent.appendChild(el);
}

const h = document.getElementById("ruler-h");
const v = document.getElementById("ruler-v");

for (let i = 0; i <= 66; i++) {
  const x = Math.round(i * UNIT) + 0.5;
  const top = i % 10 === 0 ? 6 : i % 5 === 0 ? 10 : 13;
  add(h, "path", { class: "tick", d: `M${x} ${top}V16` });
  if (i % 10 === 0) add(h, "text", { x: x + 2, y: 11 }, i);
}
for (let i = 0; i <= 30; i++) {
  const y = Math.round(i * UNIT) + 0.5;
  const left = i % 10 === 0 ? 5 : i % 5 === 0 ? 11 : 14;
  add(v, "path", { class: "tick", d: `M${left} ${y}H18` });
  if (i % 10 === 0) add(v, "text", { transform: `translate(11 ${y + (i ? 11 : 7)}) rotate(-90)` }, i);
}
add(h, "path", { class: "cursor", d: "M728.5 0V16" });
add(v, "path", { class: "cursor", d: "M1 212.5H18" });
```
